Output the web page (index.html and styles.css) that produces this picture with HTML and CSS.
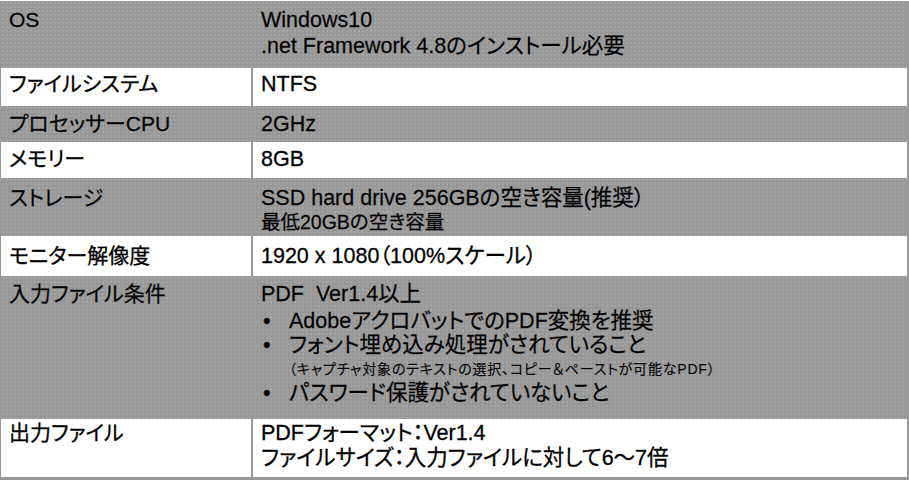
FILE: index.html
```html
<!DOCTYPE html>
<html lang="ja">
<head>
<meta charset="utf-8">
<title>動作環境</title>
<link rel="stylesheet" href="styles.css">
</head>
<body>
<div class="spec">
  <div class="row gray r1">
    <div class="k">OS</div>
    <div class="v">Windows10<br>.net Framework 4.8のインストール必要</div>
  </div>
  <div class="row white r2">
    <div class="k">ファイルシステム</div>
    <div class="v">NTFS</div>
  </div>
  <div class="row gray r3">
    <div class="k">プロセッサーCPU</div>
    <div class="v">2GHz</div>
  </div>
  <div class="row white r4">
    <div class="k">メモリー</div>
    <div class="v">8GB</div>
  </div>
  <div class="row gray r5">
    <div class="k">ストレージ</div>
    <div class="v">SSD hard drive 256GBの空き容量(推奨）<div class="sub">最低20GBの空き容量</div></div>
  </div>
  <div class="row white r6">
    <div class="k">モニター解像度</div>
    <div class="v">1920 x 1080（100%スケール）</div>
  </div>
  <div class="row gray r7">
    <div class="k">入力ファイル条件</div>
    <div class="v">
      <div class="lead">PDF&nbsp; Ver1.4以上</div>
      <ul class="bullets">
        <li><span class="dot">•</span><span>AdobeアクロバットでのPDF変換を推奨</span></li>
        <li><span class="dot">•</span><span>フォント埋め込み処理がされていること</span></li>
        <li class="note">（キャプチャ対象のテキストの選択、コピー＆ペーストが可能なPDF）</li>
        <li><span class="dot">•</span><span>パスワード保護がされていないこと</span></li>
      </ul>
    </div>
  </div>
  <div class="row white r8">
    <div class="k">出力ファイル</div>
    <div class="v">PDFフォーマット：Ver1.4<div class="second">ファイルサイズ：入力ファイルに対して6～7倍</div></div>
  </div>
</div>
</body>
</html>
```
FILE: styles.css
```css
html, body {
  margin: 0;
  padding: 0;
  background: #ffffff;
}

body {
  font-family: "Liberation Sans", Arial, "Noto Sans CJK JP", sans-serif;
  font-feature-settings: "palt";
  color: #000000;
  font-size: 20px;
  line-height: 26px;
  -webkit-text-stroke: 0.3px #000000;
}

.spec {
  box-sizing: border-box;
  width: 909px;
  margin-top: 1px;
  border-left: 1px solid #999999;
  border-right: 2px solid #999999;
  border-bottom: 3px solid #999999;
}

.row {
  display: grid;
  grid-template-columns: 252px 1fr;
  box-sizing: border-box;
}

.row.white {
  background: #ffffff;
}

.row.gray {
  background-color: #989898;
  background-image: radial-gradient(circle, rgba(255, 255, 255, 0.12) 0.7px, transparent 1.1px);
  background-size: 4px 4px;
}

.row.gray .k,
.row.gray .v {
  text-shadow: 0 0 1px rgba(255, 255, 255, 0.4);
}

.k {
  box-sizing: border-box;
  padding-left: 8px;
  border-right: 2px solid #999999;
  white-space: nowrap;
  font-size: 21px;
}

.row.gray .k {
  border-right-color: transparent;
}

.v {
  padding-left: 8px;
  white-space: nowrap;
  font-size: 21.5px;
}

.r1 { height: 67px; }
.r2 { height: 38px; }
.r3 { height: 36px; }
.r4 { height: 36px; }
.r5 { height: 58px; }
.r6 { height: 40px; }
.r7 { height: 143px; }
.r8 { height: 58px; }

.r1 .k, .r1 .v { padding-top: 6px; }
.r2 .k, .r2 .v { padding-top: 3px; }
.r3 .k, .r3 .v { padding-top: 5px; }
.r4 .k, .r4 .v { padding-top: 4px; }
.r5 .k, .r5 .v { padding-top: 7px; }
.r6 .k, .r6 .v { padding-top: 7px; }
.r7 .k, .r7 .v { padding-top: 5px; }
.r8 .k, .r8 .v { padding-top: 1px; }

.sub {
  font-size: 19.5px;
  line-height: 23px;
}

.second {
  line-height: 25px;
}

.bullets {
  list-style: none;
  margin: 2px 0 0 0;
  padding: 0;
}

.bullets li {
  display: flex;
  line-height: 24px;
}

.dot {
  width: 28px;
  padding-left: 2px;
  box-sizing: border-box;
}

.bullets li.note {
  font-size: 14px;
  letter-spacing: 0.8px;
  line-height: 24px;
  padding-left: 28px;
  -webkit-text-stroke: 0.2px #000000;
}
```
